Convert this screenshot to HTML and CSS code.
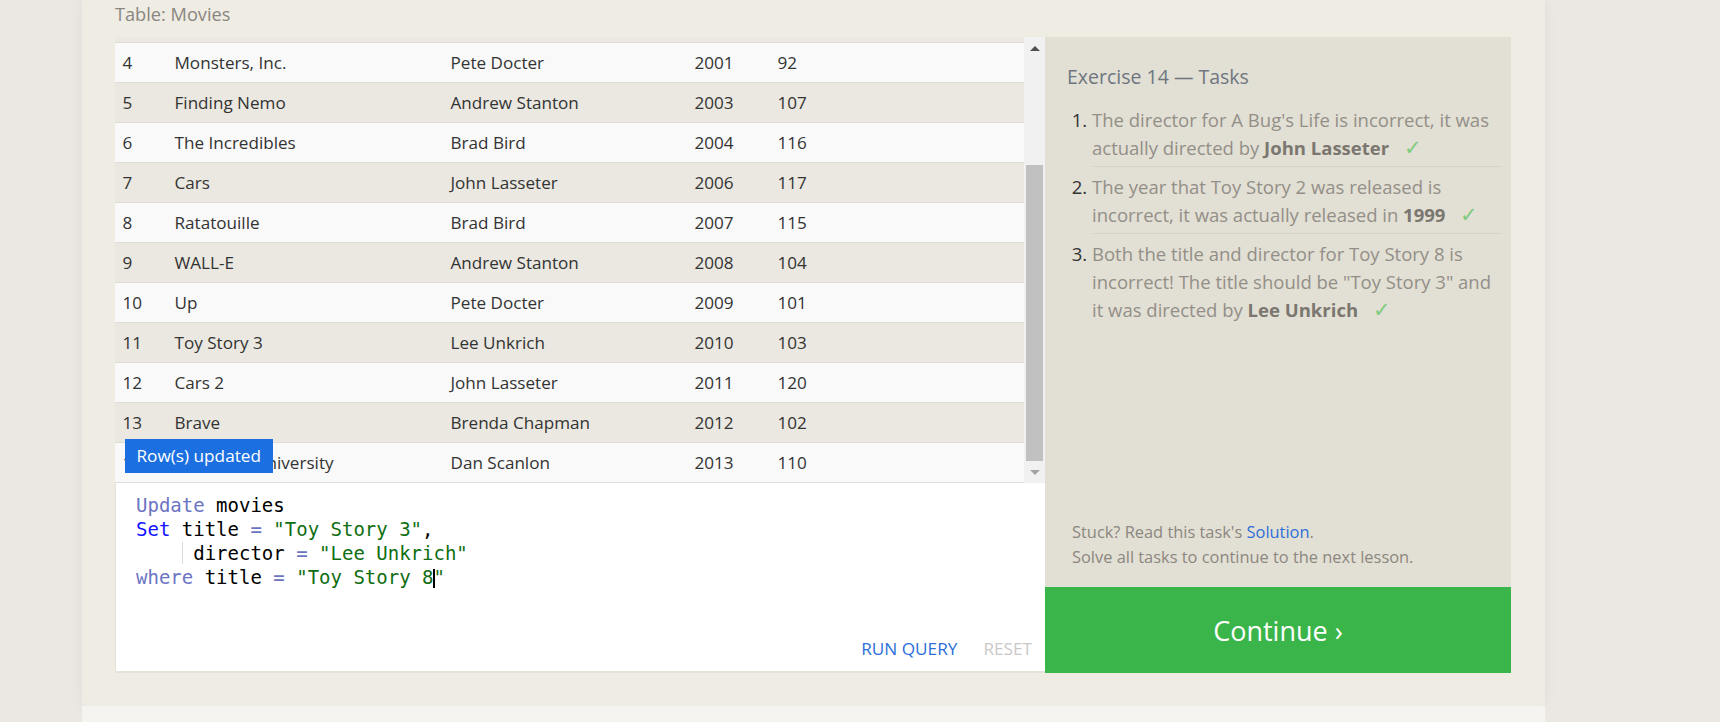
FILE: index.html
```html
<!DOCTYPE html>
<html lang="en">
<head>
<meta charset="utf-8">
<title>SQL Lesson 14 — Updating rows</title>
<link rel="stylesheet" href="styles.css">
</head>
<body>
<div class="page">
  <div class="card">
    <div class="label">Table: Movies</div>
    <div class="workspace">
      <div class="main">
        <div class="results">
          <div class="table-view">
            <div class="rows">
              <div class="row row-clipped"></div>
              <div class="row"><span>4</span><span>Monsters, Inc.</span><span>Pete Docter</span><span>2001</span><span>92</span></div>
              <div class="row"><span>5</span><span>Finding Nemo</span><span>Andrew Stanton</span><span>2003</span><span>107</span></div>
              <div class="row"><span>6</span><span>The Incredibles</span><span>Brad Bird</span><span>2004</span><span>116</span></div>
              <div class="row"><span>7</span><span>Cars</span><span>John Lasseter</span><span>2006</span><span>117</span></div>
              <div class="row"><span>8</span><span>Ratatouille</span><span>Brad Bird</span><span>2007</span><span>115</span></div>
              <div class="row"><span>9</span><span>WALL-E</span><span>Andrew Stanton</span><span>2008</span><span>104</span></div>
              <div class="row"><span>10</span><span>Up</span><span>Pete Docter</span><span>2009</span><span>101</span></div>
              <div class="row"><span>11</span><span>Toy Story 3</span><span>Lee Unkrich</span><span>2010</span><span>103</span></div>
              <div class="row"><span>12</span><span>Cars 2</span><span>John Lasseter</span><span>2011</span><span>120</span></div>
              <div class="row"><span>13</span><span>Brave</span><span>Brenda Chapman</span><span>2012</span><span>102</span></div>
              <div class="row"><span>14</span><span>Monsters University</span><span>Dan Scanlon</span><span>2013</span><span>110</span></div>
            </div>
          </div>
          <div class="scrollbar">
            <div class="sb-btn"><span class="tri up"></span></div>
            <div class="sb-track"><div class="sb-thumb"></div></div>
            <div class="sb-btn"><span class="tri down"></span></div>
          </div>
          <div class="toast">Row(s) updated</div>
        </div>
        <div class="editor">
          <div class="code">
            <div class="line"><span class="kw2">Update</span> movies</div>
            <div class="line"><span class="kw">Set</span> title <span class="op">=</span> <span class="str">"Toy Story 3"</span>,</div>
            <div class="line">    <span class="guide"> </span>director <span class="op">=</span> <span class="str">"Lee Unkrich"</span></div>
            <div class="line"><span class="kw2">where</span> title <span class="op">=</span> <span class="str">"Toy Story 8<span class="caret"></span>"</span></div>
          </div>
          <div class="actions">
            <span class="run">RUN QUERY</span>
            <span class="reset">RESET</span>
          </div>
        </div>
      </div>
      <div class="side">
        <div class="tasks">
          <h2 class="tasks-title">Exercise 14 — Tasks</h2>
          <ol class="task-list">
            <li>The director for A Bug's Life is incorrect, it was actually directed by <b>John Lasseter</b><span class="check">✓</span></li>
            <li>The year that Toy Story 2 was released is incorrect, it was actually released in <b>1999</b><span class="check">✓</span></li>
            <li>Both the title and director for Toy Story 8 is incorrect! The title should be "Toy Story 3" and it was directed by <b>Lee Unkrich</b><span class="check">✓</span></li>
          </ol>
          <p class="hint">Stuck? Read this task's <a class="link">Solution</a>.<br>Solve all tasks to continue to the next lesson.</p>
        </div>
        <div class="continue">Continue ›</div>
      </div>
    </div>
  </div>
  <div class="next"></div>
</div>
</body>
</html>
```
FILE: styles.css
```css
html, body {
  margin: 0;
  padding: 0;
}
body {
  background: #ebe7e3;
  font-family: "Open Sans", "Noto Sans", sans-serif;
  color: #333;
  height: 722px;
  overflow: hidden;
}
.page {
  margin-left: 82px;
  width: 1463px;
}
.card {
  background: #efece4;
  padding: 2px 34px 33px 33px;
  border-radius: 0 0 4px 4px;
  box-shadow: 0 0 14px rgba(0, 0, 0, 0.05);
}
.label {
  font-size: 18.2px;
  line-height: 24px;
  color: #8a8680;
}
.workspace {
  margin-top: 11px;
  display: flex;
  height: 636px;
}
.main {
  width: 930px;
  display: flex;
  flex-direction: column;
}
.results {
  position: relative;
  height: 446px;
  display: flex;
}
.table-view {
  flex: 1;
  overflow: hidden;
}
.rows {
  margin-top: -34px;
}
.row {
  display: grid;
  grid-template-columns: 52px 276px 244px 83px 1fr;
  height: 40px;
  box-sizing: border-box;
  border-bottom: 1px solid #dfddd6;
  align-items: center;
  font-size: 17.1px;
  color: #333;
  background: #f9f9f9;
}
.row:nth-child(odd) {
  background: #eae8e0;
}
.row span {
  padding-left: 7.5px;
  white-space: nowrap;
}
.scrollbar {
  width: 21px;
  background: #f1f1f1;
  display: flex;
  flex-direction: column;
  padding-top: 1px;
  box-sizing: border-box;
}
.sb-btn {
  height: 21px;
  display: flex;
  align-items: center;
  justify-content: center;
}
.tri {
  width: 0;
  height: 0;
  border-left: 5px solid transparent;
  border-right: 5px solid transparent;
}
.tri.up {
  border-bottom: 5px solid #505050;
}
.tri.down {
  border-top: 5px solid #a3a3a3;
}
.sb-track {
  flex: 1;
  display: flex;
  flex-direction: column;
  justify-content: flex-end;
  padding: 0 2px 1px 2px;
}
.sb-thumb {
  height: 296px;
  background: #c1c1c1;
}
.toast {
  position: absolute;
  left: 10px;
  top: 402px;
  height: 34px;
  line-height: 34px;
  padding: 0 12px 0 11.5px;
  background: #1b6fe0;
  color: #fff;
  font-size: 17.2px;
}
.editor {
  height: 190px;
  box-sizing: border-box;
  background: #fff;
  border-left: 1px solid #e5e2da;
  border-bottom: 2px solid #e5e2da;
  display: flex;
  flex-direction: column;
}
.code {
  padding: 10px 20px;
  font-family: "DejaVu Sans Mono", "Liberation Mono", monospace;
  font-size: 19px;
  line-height: 24px;
  color: #000;
}
.line {
  white-space: pre;
  height: 24px;
}
.kw2, .op {
  color: #6b74c3;
}
.kw {
  color: #1414ff;
}
.str {
  color: #0f6e12;
}
.guide {
  box-shadow: inset 1px 0 0 #d9d9d9;
}
.caret {
  display: inline-block;
  width: 0;
  height: 19px;
  border-left: 2px solid #000;
  vertical-align: -4px;
  margin-right: -2px;
}
.actions {
  margin-top: auto;
  display: flex;
  justify-content: flex-end;
  gap: 26px;
  padding: 0 13px 10px 0;
  font-size: 17.2px;
  line-height: 24px;
}
.run {
  color: #2d6fd9;
}
.reset {
  color: #c9c9c9;
}
.side {
  width: 466px;
  display: flex;
  flex-direction: column;
}
.tasks {
  flex: 1;
  background: #e2dfd4;
  padding: 27px 10px 18px 22px;
  display: flex;
  flex-direction: column;
}
.tasks-title {
  margin: 0;
  font-size: 19.5px;
  font-weight: 400;
  line-height: 26px;
  color: #6e7680;
}
.task-list {
  margin: 16px 0 0;
  padding-left: 25px;
  font-size: 18.5px;
  line-height: 28.4px;
  color: #938f88;
}
.task-list li {
  padding: 6px 0 3px;
  border-bottom: 1px solid #d5d2c7;
}
.task-list li:first-child {
  padding-top: 0;
}
.task-list li:last-child {
  border-bottom: none;
}
.task-list li::marker {
  color: #333;
}
.task-list b {
  color: #7b7770;
}
.check {
  color: #7dcc7f;
  font-size: 21px;
  line-height: 1;
  margin-left: 15px;
}
.hint {
  margin: auto 0 0;
  padding-left: 5px;
  font-size: 16.4px;
  line-height: 24.4px;
  color: #8c8780;
}
.link {
  color: #2d6fd9;
}
.continue {
  height: 86px;
  background: #3ab54a;
  color: #fff;
  font-size: 27px;
  display: flex;
  align-items: center;
  justify-content: center;
}
.next {
  height: 40px;
  background: #f5f4f0;
}
```
